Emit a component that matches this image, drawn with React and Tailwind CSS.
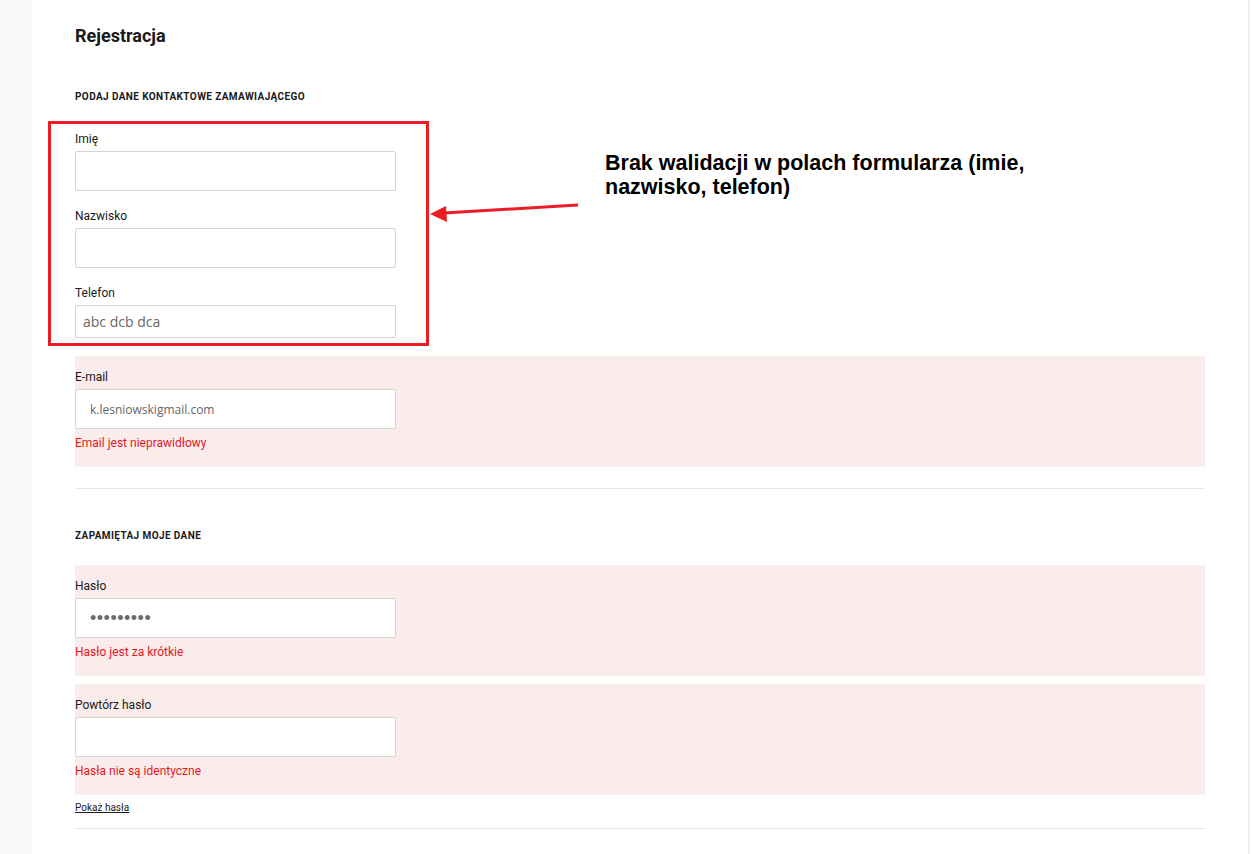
import React from "react";

// Field with label + optional error message
const Field = ({ label, value, height = "h-[40px]", valueClass = "", error }) => (
  <div className="flex flex-col">
    <label className="text-[12px] leading-[16px] text-[#1a1a1a] mb-[4px]">{label}</label>
    <input
      readOnly
      type="text"
      value={value || ""}
      className={`w-[321px] ${height} bg-white border border-[#d4d4d4] rounded-[2px] outline-none ${valueClass}`}
    />
    {error && (
      <p className="mt-[6px] text-[12px] leading-[16px] text-[#e3191f]">{error}</p>
    )}
  </div>
);

const ErrorBlock = ({ children, className = "" }) => (
  <div className={`bg-[#fbecec] pt-[13px] pb-[16px] ${className}`}>{children}</div>
);

const App = () => {
  return (
    <div
      className="relative h-[854px] overflow-hidden bg-white flex"
      style={{ fontFamily: "Roboto, 'Liberation Sans', sans-serif" }}
    >
      {/* left gray strip */}
      <div className="w-[32px] shrink-0 bg-[#f8f8f8]" />

      <main className="w-[1216px] shrink-0 px-[43px] pt-[24px]">
        <h1 className="text-[18px] leading-[24px] font-bold text-[#1a1a1a]">Rejestracja</h1>

        <h2 className="mt-[42px] text-[10px] leading-[14px] font-bold uppercase tracking-[0.4px] text-[#1a1a1a]">
          Podaj dane kontaktowe zamawiającego
        </h2>

        {/* contact fields */}
        <div className="mt-[27px] flex flex-col gap-[17px]">
          <Field label="Imię" />
          <Field label="Nazwisko" />
          <Field
            label="Telefon"
            value="abc dcb dca"
            height="h-[33px]"
            valueClass="px-[7px] text-[14px] text-[#666] font-['Open_Sans']"
          />
        </div>

        <ErrorBlock className="mt-[18px]">
          <Field
            label="E-mail"
            value="k.lesniowskigmail.com"
            valueClass="px-[14px] text-[12px] text-[#666] font-['Open_Sans']"
            error="Email jest nieprawidłowy"
          />
        </ErrorBlock>

        <hr className="mt-[21px] border-t border-[#e8e8e8]" />

        <h2 className="mt-[40px] text-[10px] leading-[14px] font-bold uppercase tracking-[0.4px] text-[#1a1a1a]">
          Zapamiętaj moje dane
        </h2>

        <ErrorBlock className="mt-[22px]">
          <Field
            label="Hasło"
            value="•••••••••"
            valueClass="px-[14px] text-[18px] text-[#6b6b6b] tracking-[0.5px] font-['Liberation_Sans']"
            error="Hasło jest za krótkie"
          />
        </ErrorBlock>

        <ErrorBlock className="mt-[8px]">
          <Field label="Powtórz hasło" error="Hasła nie są identyczne" />
        </ErrorBlock>

        <p className="mt-[6px] text-[10px] leading-[14px] text-[#1a1a1a] underline">Pokaż hasła</p>

        <hr className="mt-[13px] border-t border-[#e8e8e8]" />
      </main>

      {/* right edge line */}
      <div className="w-[2px] shrink-0 bg-[#f3ecec]" />

      {/* annotation overlay */}
      <div className="absolute left-[48px] top-[121px] w-[381px] h-[225px] border-[3px] border-[#ec1c24] pointer-events-none" />
      <svg className="absolute left-0 top-0 pointer-events-none" width="1252" height="854">
        <line x1="578" y1="205" x2="444" y2="213" stroke="#ec1c24" strokeWidth="3" />
        <polygon points="430,214 446,206 447,222" fill="#ec1c24" />
      </svg>
      <div
        className="absolute left-[605px] top-[151px] text-[21.5px] leading-[24px] font-bold text-black"
        style={{ fontFamily: "'Liberation Sans', sans-serif" }}
      >
        Brak walidacji w polach formularza (imie,
        <br />
        nazwisko, telefon)
      </div>
    </div>
  );
};

export default App;
